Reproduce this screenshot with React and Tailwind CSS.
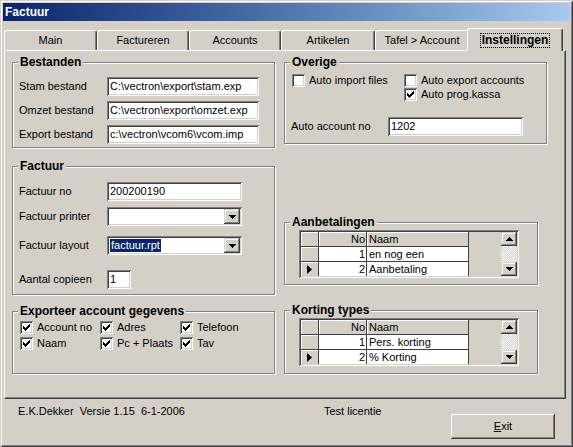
import React from 'react';

const SUNKEN = 'shadow-[inset_1px_1px_0_#808080,inset_-1px_-1px_0_#fff,inset_2px_2px_0_#404040,inset_-2px_-2px_0_#d4d0c8]';
const RAISED = 'shadow-[inset_-1px_-1px_0_#404040,inset_1px_1px_0_#d4d0c8,inset_-2px_-2px_0_#808080,inset_2px_2px_0_#fff]';
const BUTTON = 'shadow-[inset_-1px_-1px_0_#404040,inset_1px_1px_0_#fff,inset_-2px_-2px_0_#808080]';

const tabs = [
  { label: 'Main', w: 'w-[93px]' },
  { label: 'Factureren', w: 'w-[92px]' },
  { label: 'Accounts', w: 'w-[92px]' },
  { label: 'Artikelen', w: 'w-[94px]' },
  { label: 'Tafel > Account', w: 'w-[94px]' },
];

const DownArrow = () => (
  <svg width="7" height="4" viewBox="0 0 7 4">
    <path d="M0 0h7v1H6v1H5v1H4v1H3V3H2V2H1V1H0z" fill="#000" />
  </svg>
);

const UpArrow = () => (
  <svg width="7" height="4" viewBox="0 0 7 4">
    <path d="M3 0h1v1h1v1h1v1h1v1H0V3h1V2h1V1h1z" fill="#000" />
  </svg>
);

const Check = ({ checked, label }) => (
  <div className="flex items-center gap-[4px] h-[13px]">
    <span className={'relative w-[13px] h-[13px] bg-white shrink-0 ' + SUNKEN}>
      {checked && (
        <svg className="absolute left-[3px] top-[3px]" width="7" height="7" viewBox="0 0 7 7">
          <path d="M0 2h1v3H0zM1 3h1v3H1zM2 4h1v3H2zM3 3h1v3H3zM4 2h1v3H4zM5 1h1v3H5zM6 0h1v3H6z" fill="#000" />
        </svg>
      )}
    </span>
    <span className="leading-[13px] whitespace-nowrap">{label}</span>
  </div>
);

const Group = ({ label, className, children }) => (
  <div className={'relative border border-[#808080] shadow-[1px_1px_0_#fff,inset_1px_1px_0_#fff] ' + className}>
    <span className="absolute -top-[8px] left-[5px] px-[2px] bg-[#d4d0c8] font-bold text-[12px] leading-[14px] whitespace-nowrap">
      {label}
    </span>
    {children}
  </div>
);

const Field = ({ value, className }) => (
  <div className={'h-[19px] bg-white pl-[3px] leading-[19px] whitespace-nowrap overflow-hidden ' + SUNKEN + ' ' + className}>
    {value}
  </div>
);

const Combo = ({ value }) => (
  <div className={'w-[135px] h-[19px] bg-white p-[2px] flex ' + SUNKEN}>
    <div className="flex-1 flex items-center pl-[1px]">
      {value && <span className="bg-[#0a246a] text-white leading-[13px] px-[1px]">{value}</span>}
    </div>
    <div className={'w-[16px] h-[15px] bg-[#d4d0c8] flex items-center justify-center ' + RAISED}>
      <DownArrow />
    </div>
  </div>
);

const Scrollbar = () => (
  <div className="w-[16px] flex flex-col">
    <div className={'h-[14px] bg-[#d4d0c8] flex items-center justify-center ' + RAISED}>
      <UpArrow />
    </div>
    <div className="flex-1 bg-[image:repeating-conic-gradient(#fff_0%_25%,#d4d0c8_0%_50%)] bg-[length:2px_2px]" />
    <div className={'h-[14px] bg-[#d4d0c8] flex items-center justify-center ' + RAISED}>
      <DownArrow />
    </div>
  </div>
);

const Grid = ({ rows }) => (
  <div className={'w-[220px] h-[48px] p-[2px] bg-[#d4d0c8] flex ' + SUNKEN}>
    <div className="flex-1 overflow-hidden">
      <div className="flex h-[15px]">
        <div className="w-[18px] border-r border-b border-[#404040] shadow-[inset_1px_1px_0_#fff]" />
        <div className="w-[48px] border-r border-b border-[#404040] shadow-[inset_1px_1px_0_#fff] text-right pr-[1px] leading-[14px]">No</div>
        <div className="w-[102px] border-r border-b border-[#404040] shadow-[inset_1px_1px_0_#fff] pl-[2px] leading-[14px]">Naam</div>
      </div>
      {rows.map((r) => (
        <div key={r.no} className="flex h-[15px]">
          <div className="w-[18px] border-r border-b border-[#404040] shadow-[inset_1px_1px_0_#fff] flex items-center justify-center">
            {r.current && (
              <svg width="5" height="9" viewBox="0 0 5 9">
                <path d="M0 0l5 4.5L0 9z" fill="#000" />
              </svg>
            )}
          </div>
          <div className="w-[48px] bg-white border-r border-b border-[#404040] text-right pr-[1px] leading-[14px]">{r.no}</div>
          <div className="w-[102px] bg-white border-r border-b border-[#404040] pl-[2px] leading-[14px] whitespace-nowrap">{r.name}</div>
        </div>
      ))}
    </div>
    <Scrollbar />
  </div>
);

export default function App() {
  return (
    <div className="w-[573px] h-[447px] bg-[#d4d0c8] p-[3px] text-[11px] text-black font-['Liberation_Sans',Arial,sans-serif] shadow-[inset_1px_1px_0_#d4d0c8,inset_-1px_-1px_0_#404040,inset_2px_2px_0_#fff,inset_-2px_-2px_0_#808080] overflow-hidden">
      {/* title bar */}
      <div className="h-[18px] bg-linear-to-r from-[#0a246a] to-[#a6caf0] pl-[2px] text-white font-bold text-[12px] leading-[18px]">
        Factuur
      </div>

      {/* tabs */}
      <div className="mt-[7px] ml-[1px] h-[22px] flex items-end">
        {tabs.map((t) => (
          <div
            key={t.label}
            className={'h-[20px] flex items-center justify-center border-t border-l border-r border-t-white border-l-white border-r-[#404040] shadow-[inset_-1px_0_0_#808080] rounded-t-[3px] ' + t.w}
          >
            {t.label}
          </div>
        ))}
        <div className="relative z-10 -ml-[2px] -mb-[1px] w-[96px] h-[23px] bg-[#d4d0c8] flex items-center justify-center border-t border-l border-r border-t-white border-l-white border-r-[#404040] shadow-[inset_-1px_0_0_#808080] rounded-t-[3px]">
          <span className="border border-dotted border-black px-[1px] font-bold text-[12px] leading-[13px]">Instellingen</span>
        </div>
      </div>

      {/* panel */}
      <div className="ml-[1px] w-[562px] h-[349px] border-t border-l border-white border-r border-b border-r-[#404040] border-b-[#404040] shadow-[inset_-1px_-1px_0_#808080] flex pl-[7px] pt-[11px] gap-[9px]">
        <div className="w-[263px] flex flex-col">
          <Group label="Bestanden" className="w-[263px] h-[86px]">
            <div className="pt-[14px] pl-[6px] flex flex-col gap-[5px]">
              <div className="flex items-center">
                <span className="w-[88px]">Stam bestand</span>
                <Field className="w-[152px]" value={'C:\\vectron\\export\\stam.exp'} />
              </div>
              <div className="flex items-center">
                <span className="w-[88px]">Omzet bestand</span>
                <Field className="w-[152px]" value={'C:\\vectron\\export\\omzet.exp'} />
              </div>
              <div className="flex items-center">
                <span className="w-[88px]">Export bestand</span>
                <Field className="w-[152px]" value={'c:\\vectron\\vcom6\\vcom.imp'} />
              </div>
            </div>
          </Group>

          <Group label="Factuur" className="mt-[18px] w-[263px] h-[129px]">
            <div className="pt-[15px] pl-[6px] flex flex-col">
              <div className="flex items-center">
                <span className="w-[88px]">Factuur no</span>
                <Field className="w-[135px]" value="200200190" />
              </div>
              <div className="flex items-center mt-[6px]">
                <span className="w-[88px] self-start pt-[1px]">Factuur printer</span>
                <Combo />
              </div>
              <div className="flex items-center mt-[10px]">
                <span className="w-[88px]">Factuur layout</span>
                <Combo value="factuur.rpt" />
              </div>
              <div className="flex items-center mt-[15px]">
                <span className="w-[88px]">Aantal copieen</span>
                <Field className="w-[24px]" value="1" />
              </div>
            </div>
          </Group>

          <Group label="Exporteer account gegevens" className="mt-[16px] w-[263px] h-[63px]">
            <div className="pt-[9px] pl-[7px] grid grid-cols-[80px_80px_80px] gap-y-[3px]">
              <Check checked label="Account no" />
              <Check checked label="Adres" />
              <Check checked label="Telefoon" />
              <Check checked label="Naam" />
              <Check checked label="Pc + Plaats" />
              <Check checked label="Tav" />
            </div>
          </Group>
        </div>

        <div className="w-[263px] flex flex-col">
          <Group label="Overige" className="w-[263px] h-[82px]">
            <div className="pt-[11px] pl-[7px]">
              <div className="grid grid-cols-[112px_auto] gap-y-[1px]">
                <Check label="Auto import files" />
                <Check label="Auto export accounts" />
                <div />
                <Check checked label="Auto prog.kassa" />
              </div>
              <div className="flex items-center mt-[16px] -ml-[1px]">
                <span className="w-[97px]">Auto account no</span>
                <Field className="w-[135px]" value="1202" />
              </div>
            </div>
          </Group>

          <Group label="Aanbetalingen" className="mt-[78px] w-[254px] h-[63px]">
            <div className="pt-[7px] pl-[14px]">
              <Grid
                rows={[
                  { no: 1, name: 'en nog een' },
                  { no: 2, name: 'Aanbetaling', current: true },
                ]}
              />
            </div>
          </Group>

          <Group label="Korting types" className="mt-[25px] w-[254px] h-[64px]">
            <div className="pt-[7px] pl-[14px]">
              <Grid
                rows={[
                  { no: 1, name: 'Pers. korting' },
                  { no: 2, name: '% Korting', current: true },
                ]}
              />
            </div>
          </Group>
        </div>
      </div>

      {/* footer */}
      <div className="h-[45px] flex items-start">
        <span className="ml-[15px] mt-[6px] w-[306px] leading-[13px] whitespace-pre">E.K.Dekker  Versie 1.15  6-1-2006</span>
        <span className="mt-[6px] w-[127px] leading-[13px]">Test licentie</span>
        <button className={'mt-[15px] w-[104px] h-[25px] bg-[#d4d0c8] flex items-center justify-center ' + BUTTON}>
          <span><span className="underline">E</span>xit</span>
        </button>
      </div>
    </div>
  );
}
